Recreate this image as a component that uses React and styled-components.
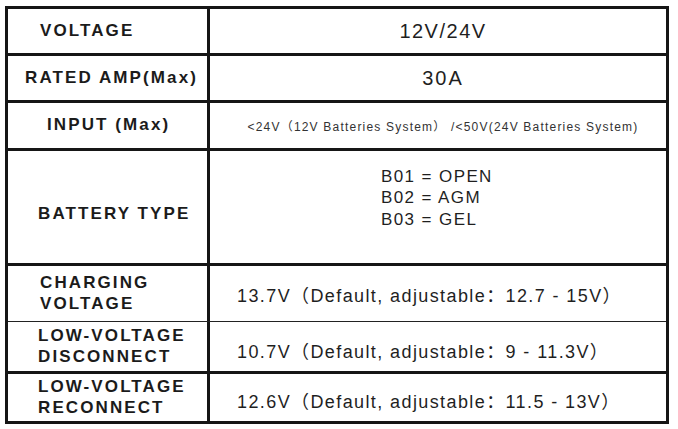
import React from "react";
import styled, { createGlobalStyle } from "styled-components";

const GlobalStyle = createGlobalStyle`
  html, body {
    margin: 0;
    padding: 0;
    background: #ffffff;
  }
  body {
    font-family: "Liberation Sans", "Noto Sans CJK SC", Arial, sans-serif;
    color: #1d1d1d;
  }
`;

const Page = styled.div`
  padding: 6px 0 0 5px;
`;

const Table = styled.div`
  width: 664px;
  box-sizing: border-box;
  border: 3px solid #161616;
  display: flex;
  flex-direction: column;
`;

const Row = styled.div`
  box-sizing: border-box;
  display: grid;
  grid-template-columns: 202px 1fr;
  height: ${p => p.h}px;
  border-top: ${p => (p.first ? "none" : p.thin ? "1px solid #222" : "3px solid #161616")};
`;

const Label = styled.div`
  display: flex;
  align-items: center;
  padding-left: ${p => p.pad}px;
  padding-top: ${p => p.shift || 0}px;
  border-right: 3px solid #161616;
  font-weight: bold;
  font-size: 17px;
  letter-spacing: 2.1px;
  line-height: 20.5px;
  color: #1b1b1b;
  white-space: nowrap;
`;

const Value = styled.div`
  display: flex;
  align-items: center;
  justify-content: ${p => (p.center ? "center" : "flex-start")};
  padding-left: ${p => (p.center ? 10 : 27)}px;
  padding-top: ${p => p.shift || 0}px;
  font-size: ${p => p.size || 18}px;
  letter-spacing: ${p => (p.spacing != null ? p.spacing : 1.4)}px;
  color: ${p => p.color || "#1f1f1f"};
  white-space: nowrap;
`;

const TypeList = styled.div`
  display: flex;
  flex-direction: column;
  justify-content: center;
  padding-left: 171px;
  padding-bottom: 18px;
  font-size: 17px;
  line-height: 21.5px;
  letter-spacing: 1.4px;
  color: #1f1f1f;
`;

export default function App() {
  return (
    <Page>
      <GlobalStyle />
      <Table>
        <Row first h={44}>
          <Label pad={32}>VOLTAGE</Label>
          <Value center size={20} spacing={1.5}>12V/24V</Value>
        </Row>
        <Row h={47}>
          <Label pad={17}>RATED AMP(Max)</Label>
          <Value center size={20} spacing={2}>30A</Value>
        </Row>
        <Row h={48}>
          <Label pad={39}>INPUT (Max)</Label>
          <Value center size={12} spacing={1.2} color="#333">
            &lt;24V（12V Batteries System） /&lt;50V(24V Batteries System)
          </Value>
        </Row>
        <Row h={115}>
          <Label pad={30} shift={14}>BATTERY TYPE</Label>
          <TypeList>
            <span>B01 = OPEN</span>
            <span>B02 = AGM</span>
            <span>B03 = GEL</span>
          </TypeList>
        </Row>
        <Row h={58}>
          <Label pad={32}>
            CHARGING
            <br />
            VOLTAGE
          </Label>
          <Value>13.7V（Default, adjustable：12.7 - 15V）</Value>
        </Row>
        <Row thin h={50}>
          <Label pad={30}>
            LOW-VOLTAGE
            <br />
            DISCONNECT
          </Label>
          <Value shift={6}>10.7V（Default, adjustable：9 - 11.3V）</Value>
        </Row>
        <Row h={50}>
          <Label pad={30}>
            LOW-VOLTAGE
            <br />
            RECONNECT
          </Label>
          <Value shift={4}>12.6V（Default, adjustable：11.5 - 13V）</Value>
        </Row>
      </Table>
    </Page>
  );
}
